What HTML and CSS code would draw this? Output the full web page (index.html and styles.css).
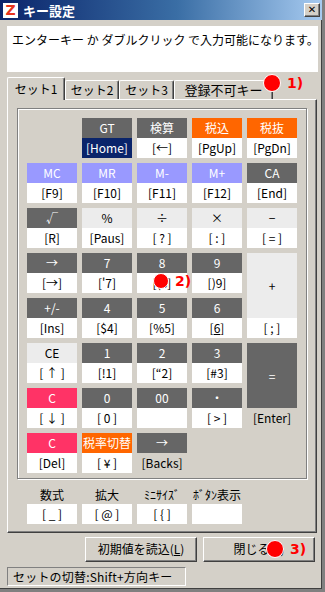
FILE: index.html
```html
<!DOCTYPE html>
<html lang="ja">
<head>
  <meta charset="UTF-8">
  <title>キー設定</title>
  <link rel="stylesheet" href="styles.css">
</head>
<body>

  <div id="window">
    <div id="titlebar">
      <span class="appIcon">Z</span>
      <span class="title">キー設定</span>
      <span class="closeBtn">✕</span>
    </div>

    <div id="hint">エンターキー か ダブルクリック で入力可能になります。</div>

    <div id="tabs">
      <div class="tab active">セット1</div>
      <div class="tab t2">セット2</div>
      <div class="tab t3">セット3</div>
      <div class="tab t4">登録不可キー</div>
    </div>

    <div id="panel">
      <div id="frame">
        <div id="keypad">
          <div class="key empty"></div>
          <div class="key"><div class="lbl dark">GT</div><div class="code sel">[Home]</div></div>
          <div class="key"><div class="lbl dark">検算</div><div class="code">[←]</div></div>
          <div class="key"><div class="lbl orange">税込</div><div class="code">[PgUp]</div></div>
          <div class="key"><div class="lbl orange">税抜</div><div class="code">[PgDn]</div></div>

          <div class="key"><div class="lbl mem">MC</div><div class="code">[F9]</div></div>
          <div class="key"><div class="lbl mem">MR</div><div class="code">[F10]</div></div>
          <div class="key"><div class="lbl mem">M-</div><div class="code">[F11]</div></div>
          <div class="key"><div class="lbl mem">M+</div><div class="code">[F12]</div></div>
          <div class="key"><div class="lbl dark">CA</div><div class="code">[End]</div></div>

          <div class="key"><div class="lbl dark">√</div><div class="code">[R]</div></div>
          <div class="key"><div class="lbl light">%</div><div class="code">[Paus]</div></div>
          <div class="key"><div class="lbl light">÷</div><div class="code">[ ? ]</div></div>
          <div class="key"><div class="lbl light">×</div><div class="code">[ : ]</div></div>
          <div class="key"><div class="lbl light">−</div><div class="code">[ = ]</div></div>

          <div class="key"><div class="lbl dark">→</div><div class="code">[→]</div></div>
          <div class="key"><div class="lbl dark">7</div><div class="code">['7]</div></div>
          <div class="key"><div class="lbl dark">8</div><div class="code">[(8]</div></div>
          <div class="key"><div class="lbl dark">9</div><div class="code">[)9]</div></div>
          <div class="key tall"><div class="lbl light">+</div><div class="code">[ ; ]</div></div>

          <div class="key"><div class="lbl dark">+/-</div><div class="code">[Ins]</div></div>
          <div class="key"><div class="lbl dark">4</div><div class="code">[$4]</div></div>
          <div class="key"><div class="lbl dark">5</div><div class="code">[%5]</div></div>
          <div class="key"><div class="lbl dark">6</div><div class="code">[<u>6</u>]</div></div>

          <div class="key"><div class="lbl light">CE</div><div class="code">[ ↑ ]</div></div>
          <div class="key"><div class="lbl dark">1</div><div class="code">[!1]</div></div>
          <div class="key"><div class="lbl dark">2</div><div class="code">[“2]</div></div>
          <div class="key"><div class="lbl dark">3</div><div class="code">[#3]</div></div>
          <div class="key tall"><div class="lbl dark">=</div><div class="code bare">[Enter]</div></div>

          <div class="key"><div class="lbl pink">C</div><div class="code">[ ↓ ]</div></div>
          <div class="key"><div class="lbl dark">0</div><div class="code">[ 0 ]</div></div>
          <div class="key"><div class="lbl dark">00</div><div class="code"></div></div>
          <div class="key"><div class="lbl dark">・</div><div class="code">[ &gt; ]</div></div>

          <div class="key"><div class="lbl pink">C</div><div class="code">[Del]</div></div>
          <div class="key"><div class="lbl orange">税率切替</div><div class="code">[ ¥ ]</div></div>
          <div class="key"><div class="lbl dark">→</div><div class="code bare">[Backs]</div></div>
        </div>
      </div>

      <div id="extras">
        <div class="extra"><div class="extraLbl">数式</div><div class="code">[ _ ]</div></div>
        <div class="extra"><div class="extraLbl">拡大</div><div class="code">[ @ ]</div></div>
        <div class="extra"><div class="extraLbl">ﾐﾆｻｲｽﾞ</div><div class="code">[ { ]</div></div>
        <div class="extra"><div class="extraLbl">ﾎﾞﾀﾝ表示</div><div class="code"></div></div>
      </div>
    </div>

    <div id="buttons">
      <div class="btn">初期値を読込(<u>L</u>)</div>
      <div class="btn">閉じる(<u>X</u>)</div>
    </div>

    <div id="status">セットの切替:Shift+方向キー</div>

    <!-- annotation markers -->
    <div class="marker m1"><span class="dot"></span><span class="num">1)</span></div>
    <div class="marker m2"><span class="dot"></span><span class="num">2)</span></div>
    <div class="marker m3"><span class="dot"></span><span class="num">3)</span></div>
  </div>

</body>
</html>
```

FILE: styles.css
```css
* {
  box-sizing: border-box;
}

body {
  margin: 0;
  padding: 0;
  font-family: "Noto Sans CJK JP", "Noto Sans", sans-serif;
  font-size: 12px;
  color: #000;
  background-color: #d4d0c8;
}

#window {
  position: relative;
  width: 325px;
  height: 592px;
  background-color: #d4d0c8;
  border-right: 3px solid #808080;
  border-bottom: 3px solid #808080;
  box-shadow: inset -1px -1px 0 #404040;
  overflow: hidden;
}

#titlebar {
  height: 20px;
  display: flex;
  align-items: center;
  padding-left: 3px;
  padding-right: 2px;
  background: linear-gradient(to right, #0a246a, #3a6ea5 55%, #a6caf0);
  color: #fff;
}

.appIcon {
  width: 15px;
  height: 15px;
  background-color: #fff;
  color: #e8341c;
  font-family: "DejaVu Sans", sans-serif;
  font-weight: bold;
  font-size: 14px;
  line-height: 15px;
  text-align: center;
}

.title {
  margin-left: 5px;
  font-weight: bold;
  font-size: 13px;
  flex: 1;
}

.closeBtn {
  width: 16px;
  height: 14px;
  background-color: #d4d0c8;
  color: #000;
  border-top: 1px solid #fff;
  border-left: 1px solid #fff;
  border-right: 1px solid #404040;
  border-bottom: 1px solid #404040;
  box-shadow: inset -1px -1px 0 #808080;
  font-family: "DejaVu Sans", sans-serif;
  font-weight: bold;
  font-size: 10px;
  line-height: 12px;
  text-align: center;
}

#hint {
  margin: 6px 0 0 7px;
  width: 311px;
  height: 46px;
  padding: 5px 5px;
  background-color: #fff;
  font-size: 12px;
  white-space: nowrap;
}

#tabs {
  display: flex;
  align-items: flex-end;
  margin: 5px 0 0 7px;
  height: 22px;
  position: relative;
  z-index: 2;
}

.tab {
  height: 19px;
  border-top: 1px solid #fff;
  border-left: 1px solid #fff;
  border-right: 1px solid #404040;
  box-shadow: inset -1px 0 0 #808080;
  border-radius: 2px 2px 0 0;
  text-align: center;
  line-height: 18px;
  font-size: 12px;
}

.tab.active {
  width: 58px;
  height: 23px;
  margin-bottom: -1px;
  background-color: #d4d0c8;
  line-height: 22px;
}

.t2 { width: 54px; }
.t3 { width: 55px; }
.t4 { width: 99px; font-size: 13px; }

#panel {
  margin-left: 7px;
  width: 310px;
  height: 434px;
  border-top: 1px solid #fff;
  border-left: 1px solid #fff;
  border-right: 1px solid #404040;
  border-bottom: 1px solid #404040;
  box-shadow: inset -1px -1px 0 #808080;
  padding: 8px 0 0 9px;
}

#frame {
  width: 290px;
  height: 371px;
  border: 1px solid #808080;
  box-shadow: 1px 1px 0 #fff, inset 1px 1px 0 #fff;
  padding: 9px 0 0 9px;
}

#keypad {
  display: grid;
  grid-template-columns: repeat(5, 50px);
  grid-auto-rows: 40px;
  gap: 5px;
}

.key {
  display: flex;
  flex-direction: column;
}

.key.tall {
  grid-row: span 2;
}

.lbl {
  height: 20px;
  line-height: 20px;
  text-align: center;
  color: #fff;
  white-space: nowrap;
}

.tall .lbl {
  height: 65px;
  line-height: 65px;
}

.lbl.dark { background-color: #666; }
.lbl.orange { background-color: #ff6600; }
.lbl.mem { background-color: #9999ff; }
.lbl.pink { background-color: #ff3366; }
.lbl.light { background-color: #ececec; color: #000; }

.code {
  height: 20px;
  line-height: 20px;
  text-align: center;
  background-color: #fff;
  white-space: nowrap;
}

.code.sel {
  background-color: #0a246a;
  color: #fff;
}

.code.bare {
  background-color: transparent;
}

#extras {
  display: flex;
  gap: 5px;
  margin: 7px 0 0 10px;
}

.extra {
  width: 50px;
}

.extraLbl {
  height: 18px;
  line-height: 18px;
  text-align: center;
  white-space: nowrap;
  margin-left: -4px;
  margin-right: -4px;
}

#buttons {
  display: flex;
  gap: 6px;
  margin: 4px 0 0 85px;
}

.btn {
  width: 112px;
  height: 25px;
  border-top: 1px solid #fff;
  border-left: 1px solid #fff;
  border-right: 1px solid #404040;
  border-bottom: 1px solid #404040;
  box-shadow: inset -1px -1px 0 #808080;
  text-align: center;
  line-height: 22px;
}

#status {
  margin: 5px 0 0 7px;
  width: 179px;
  height: 19px;
  border-top: 1px solid #808080;
  border-left: 1px solid #808080;
  border-right: 1px solid #fff;
  border-bottom: 1px solid #fff;
  padding-left: 5px;
  line-height: 17px;
  letter-spacing: 0.2px;
}

.marker {
  position: absolute;
  display: flex;
  align-items: center;
  z-index: 5;
}

.dot {
  width: 18px;
  height: 18px;
  border-radius: 50%;
  background-color: #ff0000;
  border: 1px solid #fff;
}

.num {
  margin-left: 6px;
  color: #ff0000;
  font-family: "DejaVu Sans", sans-serif;
  font-weight: bold;
  font-size: 14px;
}

.m1 { left: 263px; top: 74px; }
.m2 { left: 153px; top: 273px; }
.m3 { left: 266px; top: 540px; }
.m2 .dot { width: 16px; height: 16px; }
```
